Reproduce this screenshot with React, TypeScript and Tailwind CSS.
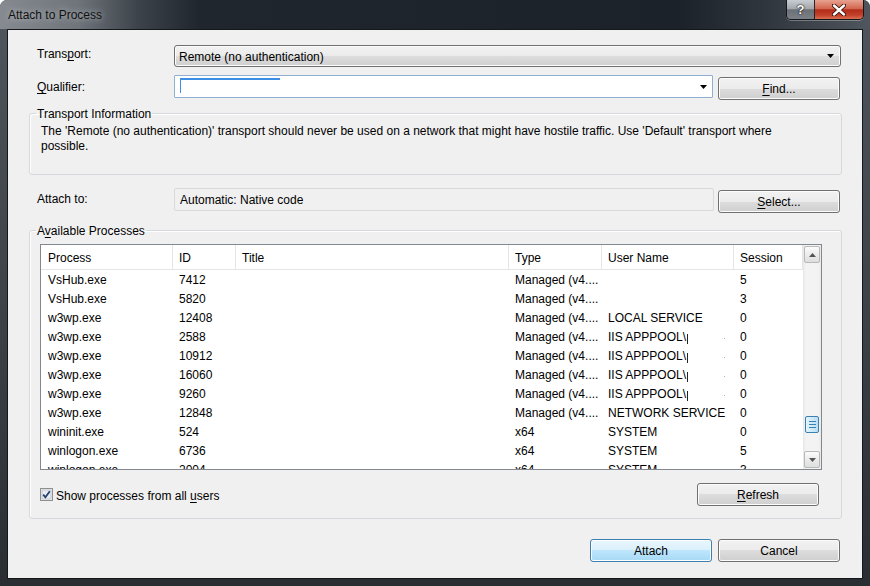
import React from "react";

const btnBase =
  "h-[23px] rounded-[3px] border flex items-center justify-center shrink-0";
const btnNormal =
  "border-[#707070] bg-[linear-gradient(to_bottom,#f2f2f2_0%,#ebebeb_50%,#dddddd_50%,#cfcfcf_100%)] shadow-[inset_0_0_0_1px_#fcfcfc]";
const btnPrimary =
  "border-[#3c7fb1] bg-[linear-gradient(to_bottom,#eaf6fd_0%,#d9f0fc_50%,#bee6fd_50%,#a7d9f5_100%)] shadow-[inset_0_0_0_1px_#ffffff]";

function Btn({
  children,
  primary,
  className = "",
}: {
  children: React.ReactNode;
  primary?: boolean;
  className?: string;
}) {
  return (
    <div className={`${btnBase} ${primary ? btnPrimary : btnNormal} ${className}`}>
      {children}
    </div>
  );
}

function U({ children }: { children: React.ReactNode }) {
  return <span className="underline underline-offset-[2px]">{children}</span>;
}

function DropArrow() {
  return (
    <svg width="7" height="4" viewBox="0 0 7 4">
      <path d="M0 0 L7 0 L3.5 4 Z" fill="#000" />
    </svg>
  );
}

type Row = {
  p: string;
  id: string;
  type: string;
  user: string;
  iis?: boolean;
  s: string;
};

const rows: Row[] = [
  { p: "VsHub.exe", id: "7412", type: "Managed (v4....", user: "", s: "5" },
  { p: "VsHub.exe", id: "5820", type: "Managed (v4....", user: "", s: "3" },
  { p: "w3wp.exe", id: "12408", type: "Managed (v4....", user: "LOCAL SERVICE", s: "0" },
  { p: "w3wp.exe", id: "2588", type: "Managed (v4....", user: "IIS APPPOOL\\", iis: true, s: "0" },
  { p: "w3wp.exe", id: "10912", type: "Managed (v4....", user: "IIS APPPOOL\\", iis: true, s: "0" },
  { p: "w3wp.exe", id: "16060", type: "Managed (v4....", user: "IIS APPPOOL\\", iis: true, s: "0" },
  { p: "w3wp.exe", id: "9260", type: "Managed (v4....", user: "IIS APPPOOL\\", iis: true, s: "0" },
  { p: "w3wp.exe", id: "12848", type: "Managed (v4....", user: "NETWORK SERVICE", s: "0" },
  { p: "wininit.exe", id: "524", type: "x64", user: "SYSTEM", s: "0" },
  { p: "winlogon.exe", id: "6736", type: "x64", user: "SYSTEM", s: "5" },
  { p: "winlogon.exe", id: "2004", type: "x64", user: "SYSTEM", s: "3" },
];

const cols = [
  { label: "Process", w: "w-[132px]", pl: "pl-[7px]" },
  { label: "ID", w: "w-[63px]", pl: "pl-[6px]" },
  { label: "Title", w: "w-[273px]", pl: "pl-[6px]" },
  { label: "Type", w: "w-[93px]", pl: "pl-[6px]" },
  { label: "User Name", w: "w-[132px]", pl: "pl-[6px]" },
  { label: "Session", w: "flex-1", pl: "pl-[6px]" },
];

function ScrollBtn({ up }: { up?: boolean }) {
  return (
    <div className="h-[17px] mx-[1px] rounded-[2px] border border-[#b9b9b9] bg-[linear-gradient(to_bottom,#fbfbfb_0%,#ececec_50%,#dedede_100%)] flex items-center justify-center">
      <svg width="7" height="4" viewBox="0 0 7 4">
        {up ? (
          <path d="M0 4 L7 4 L3.5 0 Z" fill="#555" />
        ) : (
          <path d="M0 0 L7 0 L3.5 4 Z" fill="#555" />
        )}
      </svg>
    </div>
  );
}

function ProcessList() {
  return (
    <div className="w-[782px] h-[226px] border border-[#828790] bg-white flex overflow-hidden">
      <div className="flex-1 flex flex-col overflow-hidden">
        <div className="h-[25px] shrink-0 flex border-b border-[#e5e5e5]">
          {cols.map((c) => (
            <div
              key={c.label}
              className={`${c.w} ${c.pl} shrink-0 border-r border-[#e5e5e5] flex items-center pt-[2px]`}
            >
              {c.label}
            </div>
          ))}
        </div>
        {rows.map((r, i) => (
          <div key={i} className="h-[19px] shrink-0 flex pt-[1px] leading-[18px] whitespace-nowrap">
            <div className="w-[132px] pl-[7px] shrink-0">{r.p}</div>
            <div className="w-[63px] pl-[6px] shrink-0">{r.id}</div>
            <div className="w-[273px] pl-[6px] shrink-0"></div>
            <div className="w-[93px] pl-[6px] shrink-0 overflow-hidden">{r.type}</div>
            <div className="w-[132px] pl-[6px] shrink-0 flex items-start">
              <span>{r.user}</span>
              {r.iis && (
                <>
                  <span className="w-[1px] h-[10px] mt-[6px] ml-[1px] bg-[#222]" />
                  <span className="ml-auto mr-[9px] mt-[10px] w-[1px] h-[1px] bg-[#b0b0b0]" />
                </>
              )}
            </div>
            <div className="flex-1 pl-[6px]">{r.s}</div>
          </div>
        ))}
      </div>
      <div className="w-[18px] shrink-0 flex flex-col pt-[1px] pb-[1px] bg-[linear-gradient(to_right,#e6e6e6_0%,#f3f3f3_15%,#f3f3f3_85%,#e9e9e9_100%)]">
        <ScrollBtn up />
        <div className="mt-[153px] h-[17px] mx-[2px] rounded-[2px] border border-[#3c7fb1] bg-[linear-gradient(to_right,#e3f4fc_0%,#cfeafa_50%,#b9def5_100%)] flex flex-col items-center justify-center gap-[2px]">
          <div className="w-[7px] h-[1px] bg-[#3c7fb1]" />
          <div className="w-[7px] h-[1px] bg-[#3c7fb1]" />
          <div className="w-[7px] h-[1px] bg-[#3c7fb1]" />
        </div>
        <div className="flex-1" />
        <ScrollBtn />
      </div>
    </div>
  );
}

function CheckBox() {
  return (
    <svg width="13" height="13" viewBox="0 0 13 13">
      <rect x="0.5" y="0.5" width="12" height="12" fill="#f4f4f4" stroke="#8e8f8f" />
      <rect x="2" y="2" width="9" height="9" fill="#e9ecf0" stroke="#c0c6ce" strokeWidth="1" />
      <path d="M3.2 6.6 L5.4 9.2 L9.8 3.2" fill="none" stroke="#2b3f73" strokeWidth="1.8" />
    </svg>
  );
}

export default function App() {
  return (
    <div className="w-[870px] h-[586px] flex flex-col bg-[#3a3f45] rounded-t-[7px] overflow-hidden font-['Liberation_Sans',Arial,sans-serif] text-[12px] text-black select-none">
      {/* Title bar */}
      <div className="h-[29px] shrink-0 flex items-start justify-between pl-[8px] pr-[6px] bg-[linear-gradient(to_right,#868b91_0%,#6e747a_9%,#3c4249_16%,#20262d_23%,#1c2229_78%,#30363d_88%,#50565d_100%)]">
        <span className="mt-[7px] leading-[16px] text-[#111] [text-shadow:0_0_6px_#c8ccd0]">
          Attach to Process
        </span>
        <div className="flex h-[20px] rounded-b-[5px] border border-t-0 border-[#14171a] overflow-hidden shadow-[0_1px_0_rgba(255,255,255,0.3)]">
          <div className="w-[28px] flex items-center justify-center border-r border-[#22262b] bg-[linear-gradient(to_bottom,#c9cdd1_0%,#a3a8ad_45%,#6a7076_52%,#7b8187_100%)] text-white font-bold text-[13px] [text-shadow:0_0_2px_#000,0_0_1px_#000]">
            ?
          </div>
          <div className="w-[48px] flex items-center justify-center bg-[linear-gradient(to_bottom,#e7a291_0%,#d3664f_45%,#b22d19_52%,#c3402a_80%,#d9704f_100%)]">
            <svg width="14" height="12" viewBox="0 0 14 12">
              <path d="M2 1.5 L12 10.5 M12 1.5 L2 10.5" stroke="#3a0c05" strokeWidth="4.2" strokeLinecap="round" />
              <path d="M2 1.5 L12 10.5 M12 1.5 L2 10.5" stroke="#ffffff" strokeWidth="2.4" strokeLinecap="round" />
            </svg>
          </div>
        </div>
      </div>

      {/* Frame body */}
      <div className="flex-1 flex px-[7px] pb-[7px] bg-[linear-gradient(to_bottom,#4e545b_0%,#41464d_40%,#2a2e33_100%)]">
        <div className="flex-1 border border-[#15181b] bg-[#f0f0f0] flex flex-col pl-[21px] pr-[20px]">
          {/* Transport */}
          <div className="mt-[15px] h-[22px] flex items-start">
            <div className="w-[145px] pl-[8px] pt-[2px] leading-[15px]">
              Trans<U>p</U>ort:
            </div>
            <div className="flex-1 mr-[1px] h-[22px] rounded-[3px] border border-[#707070] bg-[linear-gradient(to_bottom,#f2f2f2_0%,#ebebeb_50%,#dddddd_50%,#cfcfcf_100%)] shadow-[inset_0_0_0_1px_#fcfcfc] flex items-center pl-[4px] pr-[6px]">
              <span className="flex-1 pt-[2px]">Remote (no authentication)</span>
              <DropArrow />
            </div>
          </div>

          {/* Qualifier */}
          <div className="mt-[8px] h-[25px] flex items-start">
            <div className="w-[145px] pl-[8px] pt-[5px] leading-[15px]">
              <U>Q</U>ualifier:
            </div>
            <div className="relative w-[539px] h-[23px] border border-[#8fb0d3] bg-white rounded-[1px] flex items-center justify-end pr-[5px]">
              <div className="absolute left-[5px] top-[2px] w-[100px] h-[2px] bg-[#3d8ee6]" />
              <div className="absolute left-[5px] top-[2px] w-[1px] h-[15px] bg-[#3d8ee6]" />
              <DropArrow />
            </div>
            <Btn className="ml-[5px] mt-[2px] w-[122px]">
              <U>F</U>ind...
            </Btn>
          </div>

          {/* Transport Information */}
          <fieldset className="mt-[5px] border border-[#d5d9dd] rounded-[3px] shadow-[inset_1px_1px_0_#ffffff] px-0">
            <legend className="ml-[6px] px-[1px] pt-[2px] leading-[14px]">Transport Information</legend>
            <div className="pl-[11px] pt-[3px] pb-[20px] leading-[15px]">
              <div>
                The 'Remote (no authentication)' transport should never be used on a network that might have hostile traffic. Use 'Default' transport where
              </div>
              <div>possible.</div>
            </div>
          </fieldset>

          {/* Attach to */}
          <div className="mt-[13px] h-[25px] flex items-start">
            <div className="w-[145px] pl-[8px] pt-[4px] leading-[15px]">Attach to:</div>
            <div className="w-[540px] h-[23px] border border-[#d9d9d9] rounded-[2px] bg-[#f0f0f0] pl-[5px] pt-[4px] leading-[15px]">
              Automatic: Native code
            </div>
            <Btn className="ml-[4px] mt-[2px] w-[122px]">
              <U>S</U>elect...
            </Btn>
          </div>

          {/* Available Processes */}
          <fieldset className="mt-[9px] border border-[#d5d9dd] rounded-[3px] shadow-[inset_1px_1px_0_#ffffff] px-0">
            <legend className="ml-[6px] px-[1px] pt-[2px] leading-[14px]">
              A<U>v</U>ailable Processes
            </legend>
            <div className="pl-[10px] pr-[19px] pt-[6px] pb-[12px] flex flex-col">
              <ProcessList />
              <div className="mt-[13px] h-[23px] flex items-center justify-between pr-[3px]">
                <div className="flex items-center gap-[3px]">
                  <CheckBox />
                  <span className="pt-[2px]">
                    Show processes from all <U>u</U>sers
                  </span>
                </div>
                <Btn className="w-[122px]">
                  <U>R</U>efresh
                </Btn>
              </div>
            </div>
          </fieldset>

          {/* Bottom buttons */}
          <div className="mt-[20px] flex justify-end gap-[6px] pr-[2px]">
            <Btn primary className="w-[122px]">
              Attach
            </Btn>
            <Btn className="w-[122px]">Cancel</Btn>
          </div>
        </div>
      </div>
    </div>
  );
}
